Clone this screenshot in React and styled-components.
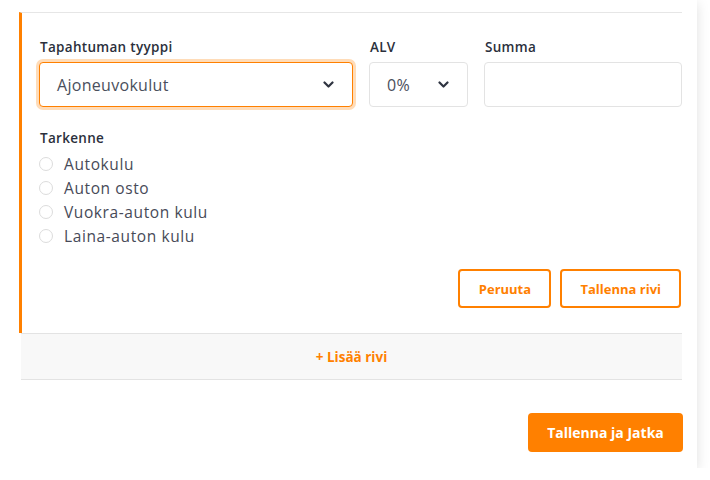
import styled, { createGlobalStyle } from "styled-components";

const GlobalStyle = createGlobalStyle`
	body {
		margin: 0;
		background: #fff;
		font-family: "Open Sans", "Noto Sans", sans-serif;
		color: #2e3340;
	}
`;

const orange = "#ff8000";

const Chevron = () => (
	<svg width="11" height="7" viewBox="0 0 11 7" fill="none">
		<path d="M1.5 1.5l4 4 4-4" stroke="#2e3340" strokeWidth="2.2" strokeLinecap="round" strokeLinejoin="round" />
	</svg>
);

const App = () => {
	const options = ["Autokulu", "Auton osto", "Vuokra-auton kulu", "Laina-auton kulu"];
	return (
		<>
			<GlobalStyle />
			<Card>
				<Row>
					<Fields>
						<Field>
							<Label>Tapahtuman tyyppi</Label>
							<Select $focused>
								<span>Ajoneuvokulut</span>
								<Chevron />
							</Select>
						</Field>
						<Field>
							<Label>ALV</Label>
							<Select>
								<span>0%</span>
								<Chevron />
							</Select>
						</Field>
						<Field>
							<Label>Summa</Label>
							<Input />
						</Field>
					</Fields>
					<Label $top>Tarkenne</Label>
					<RadioList>
						{options.map((o) => (
							<RadioItem key={o}>
								<Radio />
								{o}
							</RadioItem>
						))}
					</RadioList>
					<Actions>
						<OutlineButton>Peruuta</OutlineButton>
						<OutlineButton>Tallenna rivi</OutlineButton>
					</Actions>
				</Row>
				<AddRow>+ Lisää rivi</AddRow>
				<Footer>
					<PrimaryButton>Tallenna ja Jatka</PrimaryButton>
				</Footer>
			</Card>
		</>
	);
};

const Card = styled.div`
	width: 697px;
	background: #fff;
	box-shadow: 0 3px 12px rgba(0, 0, 0, 0.13);
	padding: 12px 15px 16px 19px;
	box-sizing: border-box;
`;

const Row = styled.div`
	border-left: 3px solid ${orange};
	border-top: 1px solid #e6e6e6;
	padding: 26px 1px 25px 17px;
`;

const Fields = styled.div`
	display: grid;
	grid-template-columns: 314px 99px 198px;
	column-gap: 16px;
`;

const Field = styled.div`
	display: flex;
	flex-direction: column;
`;

const Label = styled.div`
	font-size: 13.5px;
	font-weight: 600;
	letter-spacing: 0.3px;
	line-height: 16px;
	color: #2b303c;
	margin: ${(p) => (p.$top ? "23px 0 0 1px" : "0 0 7px 1px")};
`;

const Select = styled.div`
	height: 45px;
	box-sizing: border-box;
	border: 1px solid ${(p) => (p.$focused ? orange : "#e3e3e3")};
	box-shadow: ${(p) => (p.$focused ? "0 0 0 3px #ffdcb8" : "none")};
	border-radius: 4px;
	display: flex;
	align-items: center;
	justify-content: space-between;
	padding: 0 18px 0 17px;
	font-size: 16px;
	letter-spacing: 0.3px;
	color: #4a4f5c;
	background: #fff;
`;

const Input = styled.div`
	height: 45px;
	box-sizing: border-box;
	border: 1px solid #e3e3e3;
	border-radius: 4px;
`;

const RadioList = styled.div`
	margin-top: 6px;
	display: flex;
	flex-direction: column;
`;

const RadioItem = styled.div`
	display: flex;
	align-items: center;
	height: 24px;
	font-size: 15.5px;
	letter-spacing: 0.6px;
	color: #474a58;
`;

const Radio = styled.span`
	width: 14px;
	height: 14px;
	border: 1px solid #dcdcdc;
	border-radius: 50%;
	box-sizing: border-box;
	margin-right: 11px;
`;

const Actions = styled.div`
	display: flex;
	justify-content: flex-end;
	gap: 9px;
	margin-top: 21px;
`;

const OutlineButton = styled.button`
	height: 39px;
	padding: 0 18px;
	border: 2px solid ${orange};
	border-radius: 4px;
	background: #fff;
	color: ${orange};
	font-family: "Open Sans", sans-serif;
	font-weight: 700;
	font-size: 13px;
	min-width: 93px;
`;

const AddRow = styled.div`
	margin-left: 2px;
	height: 45px;
	display: flex;
	align-items: center;
	justify-content: center;
	background: #f8f8f8;
	border-top: 1px solid #e3e3e3;
	border-bottom: 1px solid #e3e3e3;
	color: ${orange};
	font-weight: 700;
	font-size: 13.5px;
`;

const Footer = styled.div`
	display: flex;
	justify-content: flex-end;
	margin-top: 33px;
`;

const PrimaryButton = styled.button`
	height: 39px;
	width: 155px;
	margin-right: -1px;
	border: none;
	border-radius: 4px;
	background: ${orange};
	color: #fff;
	font-family: "Open Sans", sans-serif;
	font-weight: 700;
	font-size: 14px;
`;

export default App;
